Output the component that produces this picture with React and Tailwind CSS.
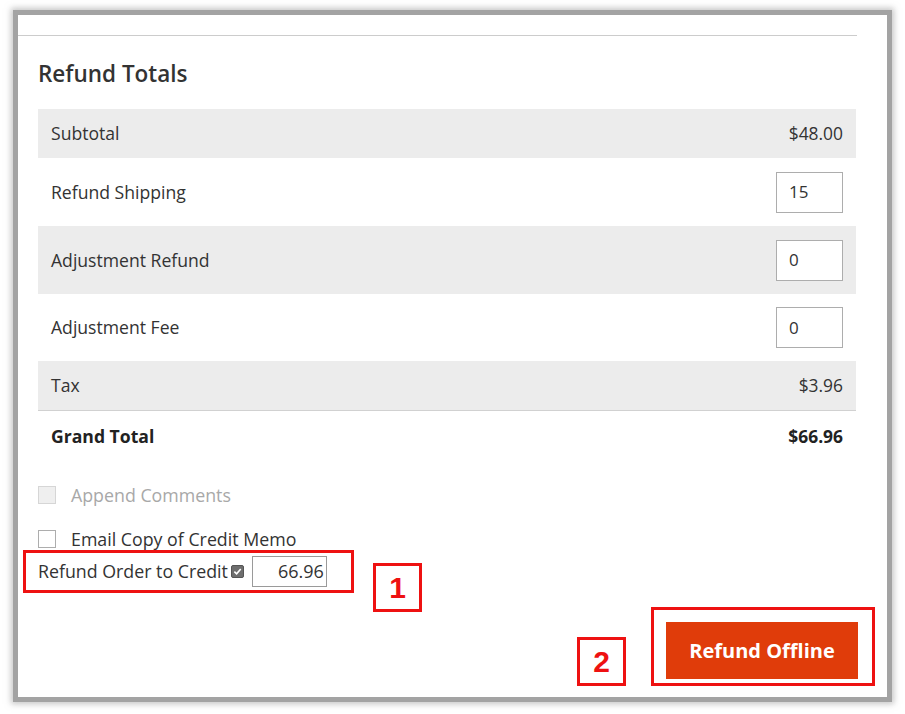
import React from "react";

const font = { fontFamily: '"Open Sans", "Noto Sans", sans-serif' };

function Row({ label, value, input, gray, h, bold }) {
  return (
    <div
      className={`flex items-center justify-between pl-[13px] pr-[13px] ${gray ? "bg-[#ececec]" : "bg-white"} ${h}`}
    >
      <span className={`text-[17.6px] ${bold ? "font-bold text-[#222]" : "text-[#333]"}`}>{label}</span>
      {input !== undefined ? (
        <div className="w-[67px] h-[41px] border border-[#adadad] bg-white flex items-center pl-[12px] text-[17px] text-[#333]">
          {input}
        </div>
      ) : (
        <span className={`text-[17.4px] ${bold ? "font-bold text-[#222]" : "text-[#333]"}`}>{value}</span>
      )}
    </div>
  );
}

export default function App() {
  return (
    <div className="w-[905px] h-[714px] bg-white overflow-hidden pt-[15px] pl-[18px]" style={font}>
      <div className="relative w-[869px] h-[682px] bg-white shadow-[0_0_0_5px_#a3a3a3,0_0_6px_7px_rgba(150,150,150,0.55)]">
        <div className="pt-[20px] pr-[30px]">
          <div className="h-px bg-[#cccccc]" />
        </div>
        <div className="pl-[20px] pr-[31px]">
          <h2 className="mt-[24px] h-[28px] leading-[28px] text-[22.5px] font-semibold text-[#333]">Refund Totals</h2>
          <div className="mt-[21px]">
            <Row label="Subtotal" value="$48.00" gray h="h-[49px]" />
            <Row label="Refund Shipping" input="15" h="h-[68px]" />
            <Row label="Adjustment Refund" input="0" gray h="h-[68px]" />
            <Row label="Adjustment Fee" input="0" h="h-[67px]" />
            <div className="border-b border-[#d1d1d1]">
              <Row label="Tax" value="$3.96" gray h="h-[49px]" />
            </div>
            <Row label="Grand Total" value="$66.96" bold h="h-[50px]" />
          </div>
          <div className="mt-[25px] flex items-center h-[18px]">
            <div className="w-[18px] h-[18px] border border-[#d6d6d6] bg-[#efefef]" />
            <span className="ml-[15px] text-[17.8px] text-[#a8a8a8]">Append Comments</span>
          </div>
          <div className="mt-[26px] flex items-center h-[18px]">
            <div className="w-[18px] h-[18px] border border-[#adadad] bg-white" />
            <span className="ml-[15px] text-[17.8px] text-[#333]">Email Copy of Credit Memo</span>
          </div>
        </div>
        <div className="mt-[2px] ml-[5px] w-[331px] h-[43px] border-[3px] border-[#ee1111] flex items-center pl-[12px]">
          <span className="text-[17.8px] text-[#333]">Refund Order to Credit</span>
          <span className="ml-[3px] w-[13px] h-[13px] rounded-[2px] bg-[#6e6e6e] border border-[#555] flex items-center justify-center">
            <svg viewBox="0 0 10 10" className="w-[9px] h-[9px]">
              <path d="M1.5 5.2 L4 7.6 L8.6 2.2" fill="none" stroke="#fff" strokeWidth="1.8" />
            </svg>
          </span>
          <div className="ml-[8px] w-[75px] h-[31px] border border-[#9a9a9a] bg-white flex items-center justify-end pr-[2px] text-[18px] text-[#333]">
            66.96
          </div>
        </div>
        <div className="absolute left-[355px] top-[548px] w-[49px] h-[49px] border-[3px] border-[#ee1111] flex items-center justify-center">
          <span className="text-[30px] font-bold text-[#ee1111] leading-none" style={{ fontFamily: '"Liberation Sans", Arial, sans-serif' }}>1</span>
        </div>
        <div className="mt-[14px] flex justify-end items-end pr-[12px]">
          <div className="w-[49px] h-[49px] border-[3px] border-[#ee1111] flex items-center justify-center">
            <span className="text-[30px] font-bold text-[#ee1111] leading-none" style={{ fontFamily: '"Liberation Sans", Arial, sans-serif' }}>2</span>
          </div>
          <div className="ml-[25px] w-[224px] h-[79px] border-[3px] border-[#ee1111] pl-[12px] pt-[12px]">
            <div className="w-[192px] h-[57px] bg-[#e03c0a] flex items-center justify-center text-white text-[20px] font-bold">
              Refund Offline
            </div>
          </div>
        </div>
      </div>
    </div>
  );
}
